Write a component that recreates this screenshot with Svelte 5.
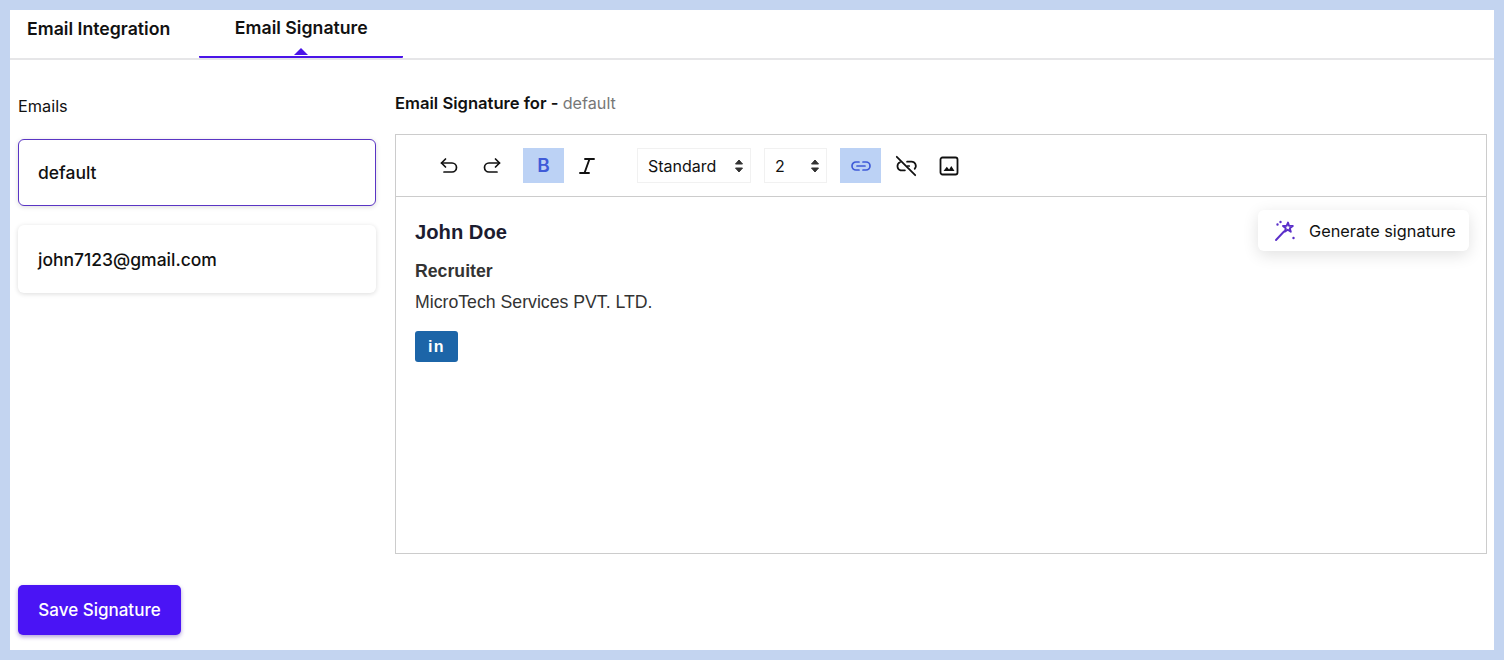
<script>
  let emails = ['default', 'john7123@gmail.com'];
  let selected = 'default';
</script>

<div class="page">
  <nav class="tabs">
    <button class="tab first">Email Integration</button>
    <button class="tab active">Email Signature</button>
  </nav>

  <main class="body">
    <aside class="emails">
      <div class="emails-label">Emails</div>
      {#each emails as email}
        <div class="email-card" class:selected={email === selected}>{email}</div>
      {/each}
    </aside>

    <section class="signature">
      <h2 class="title">Email Signature for - <span>default</span></h2>
      <div class="editor">
        <div class="toolbar">
          <button class="tool" aria-label="Undo">
            <svg viewBox="0 0 24 24" width="24" height="24" fill="none" stroke="#111" stroke-width="1.7" stroke-linecap="round" stroke-linejoin="round"><path d="M8.5 5 4.5 9l4 4" /><path d="M4.5 9H15a4.500 4.500 0 0 1 0 9H7" /></svg>
          </button>
          <button class="tool" aria-label="Redo">
            <svg viewBox="0 0 24 24" width="24" height="24" fill="none" stroke="#111" stroke-width="1.7" stroke-linecap="round" stroke-linejoin="round"><path d="M15.500 5l4 4-4 4" /><path d="M19.500 9H9a4.500 4.500 0 0 0 0 9h8" /></svg>
          </button>
          <button class="tool on bold">B</button>
          <button class="tool" aria-label="Italic">
            <svg viewBox="0 0 24 24" width="24" height="24" fill="none" stroke="#111" stroke-width="1.900" stroke-linecap="round"><path d="M10 5h9M5 19h9M14.500 5l-5 14" /></svg>
          </button>

          <div class="select wide">
            Standard
            <svg viewBox="0 0 10 16" width="10" height="16" fill="#333" stroke="#333" stroke-linejoin="round"><path d="M5 2 8.500 6H1.500zM5 14 1.500 10h7z" /></svg>
          </div>
          <div class="select narrow">
            2
            <svg viewBox="0 0 10 16" width="10" height="16" fill="#333" stroke="#333" stroke-linejoin="round"><path d="M5 2 8.500 6H1.500zM5 14 1.500 10h7z" /></svg>
          </div>

          <button class="tool on link" aria-label="Link">
            <svg viewBox="0 0 24 24" width="24" height="24" fill="none" stroke="#3f5bd8" stroke-width="1.700" stroke-linecap="round"><path d="M10 8H7a4 4 0 0 0 0 8h3M14 8h3a4 4 0 0 1 0 8h-3M8 12h8" /></svg>
          </button>
          <button class="tool unlink" aria-label="Unlink">
            <svg viewBox="0 0 24 24" width="26" height="26" fill="none" stroke="#111" stroke-width="1.600" stroke-linecap="round"><path d="M3.500 3.500l17 17" /><path d="M6.500 8.500a4 4 0 0 0 .5 7.500h4M13 8h4a4 4 0 0 1 3 6.700M13.500 12H15" /></svg>
          </button>
          <button class="tool" aria-label="Image">
            <svg viewBox="0 0 24 24" width="24" height="24"><rect x="3.500" y="3.500" width="17" height="17" rx="2" fill="none" stroke="#111" stroke-width="1.800" /><path d="M6.500 17l3.300-4.300 2.300 2.800 2.200-3.500 3.200 5z" fill="#111" /></svg>
          </button>
        </div>

        <div class="content">
          <div class="name">John Doe</div>
          <div class="role">Recruiter</div>
          <div class="company">MicroTech Services PVT. LTD.</div>
          <span class="linkedin">in</span>

          <button class="generate">
            <svg viewBox="0 0 24 24" width="24" height="24" fill="none" stroke="#5b2fc9" stroke-width="1.900" stroke-linecap="round" stroke-linejoin="round">
              <path d="M15 3.500l1 3.300 3.800.2-3 2.300 1 3.500-3-2-3 1.800 1-3.400-2.800-2.300 3.600-.1z" />
              <path d="M11 12.500 3 21" />
              <path d="M4.500 5.500h.01M20.500 19h.01M7.500 3h.01" stroke-width="2.400" />
            </svg>
            Generate signature
          </button>
        </div>
      </div>
    </section>
  </main>

  <footer class="footer">
    <button class="save">Save Signature</button>
  </footer>
</div>

<style>
  :global(body) {
    margin: 0;
    font-family: Inter, "Liberation Sans", sans-serif;
    color: #111;
  }

  button {
    font-family: inherit;
    border: none;
    background: none;
    padding: 0;
    color: inherit;
  }

  .page {
    box-sizing: border-box;
    width: 1504px;
    height: 660px;
    border: 10px solid #c3d4f0;
    background: #fff;
    display: flex;
    flex-direction: column;
  }

  .tabs {
    box-sizing: border-box;
    display: flex;
    height: 50px;
    border-bottom: 2px solid #e6e6e8;
    flex: none;
  }

  .tab {
    position: relative;
    font-size: 17.700px;
    font-weight: 600;
    height: 48px;
    padding-bottom: 12px;
  }

  .first {
    padding-left: 17px;
    padding-right: 29px;
  }

  .active {
    width: 204px;
    border-bottom: 2px solid #4a14e8;
    border-radius: 1px;
  }

  .active::after {
    content: '';
    position: absolute;
    left: 95px;
    bottom: 1px;
    border: 7px solid transparent;
    border-top: 0;
    border-bottom: 7px solid #4a14e8;
  }

  .body {
    flex: 1;
    display: flex;
    gap: 19px;
    padding: 0 7px 0 8px;
    min-height: 0;
  }

  .emails {
    width: 358px;
    flex: none;
  }

  .emails-label {
    font-size: 16.300px;
    line-height: 18px;
    margin-top: 37px;
    margin-bottom: 24px;
  }

  .email-card {
    box-sizing: border-box;
    height: 68px;
    padding-left: 20px;
    margin-bottom: 18px;
    display: flex;
    align-items: center;
    font-size: 17.500px;
    font-weight: 500;
    border-radius: 6px;
    background: #fff;
    box-shadow: 0 1px 5px rgba(0, 0, 0, 0.14);
  }

  .email-card.selected {
    height: 67px;
    margin-bottom: 19px;
    border: 1.500px solid #5a35c4;
    padding-left: 19px;
  }

  .signature {
    flex: 1;
    min-width: 0;
  }

  .title {
    margin: 34px 0 22px;
    font-size: 16.600px;
    font-weight: 600;
    line-height: 18px;
  }

  .title span {
    font-size: 16.200px;
    font-weight: 400;
    color: #777;
  }

  .editor {
    height: 420px;
    box-sizing: border-box;
    border: 1px solid #ccc;
    display: flex;
    flex-direction: column;
  }

  .toolbar {
    flex: none;
    box-sizing: border-box;
    height: 62px;
    border-bottom: 1px solid #ccc;
    display: flex;
    align-items: center;
    gap: 2px;
    padding: 0 0 0 32px;
  }

  .tool {
    width: 41px;
    height: 35px;
    display: flex;
    align-items: center;
    justify-content: center;
    flex: none;
  }

  .tool.on {
    background: #bcd2f5;
  }

  .bold {
    font-size: 19px;
    font-weight: 600;
    color: #3f5bd8;
    margin-left: 9px;
  }

  .tool.link {
    margin-left: 11px;
  }

  .tool.unlink {
    margin-left: 2px;
  }

  .select {
    box-sizing: border-box;
    height: 35px;
    border: 1px solid #f1f1f1;
    display: flex;
    align-items: center;
    justify-content: space-between;
    padding: 0 6px 0 10px;
    font-size: 16px;
  }

  .wide {
    width: 114px;
    margin-left: 28px;
  }

  .narrow {
    width: 63px;
    margin-left: 11px;
  }

  .content {
    position: relative;
    flex: 1;
    padding: 23px 19px;
    font-family: "Liberation Sans", Arial, sans-serif;
    color: #333;
  }

  .name {
    font-size: 20.200px;
    font-weight: 700;
    line-height: 24px;
    color: #1c1c30;
  }

  .role {
    margin-top: 17px;
    font-size: 17.700px;
    font-weight: 700;
    line-height: 20px;
  }

  .company {
    margin-top: 11px;
    font-size: 17.700px;
    line-height: 20px;
  }

  .linkedin {
    display: block;
    margin-top: 19px;
    width: 43px;
    height: 31px;
    border-radius: 3px;
    background: #1c65a8;
    color: #fff;
    font-size: 16px;
    font-weight: 700;
    line-height: 31px;
    text-align: center;
    letter-spacing: 1.500px;
  }

  .generate {
    position: absolute;
    top: 13px;
    right: 17px;
    width: 211px;
    height: 41px;
    display: flex;
    align-items: center;
    gap: 12px;
    padding-left: 15px;
    box-sizing: border-box;
    background: #fff;
    border-radius: 6px;
    font-family: Inter, "Liberation Sans", sans-serif;
    font-size: 16.300px;
    color: #111;
    box-shadow: 0 4px 16px rgba(0, 0, 0, 0.12);
  }

  .footer {
    flex: none;
    padding: 0 0 15px 8px;
  }

  .save {
    width: 163px;
    height: 50px;
    border-radius: 5px;
    background: #4a14f5;
    color: #fff;
    font-size: 17px;
    font-weight: 500;
    box-shadow: 0 2px 4px rgba(60, 20, 160, 0.4);
  }
</style>
